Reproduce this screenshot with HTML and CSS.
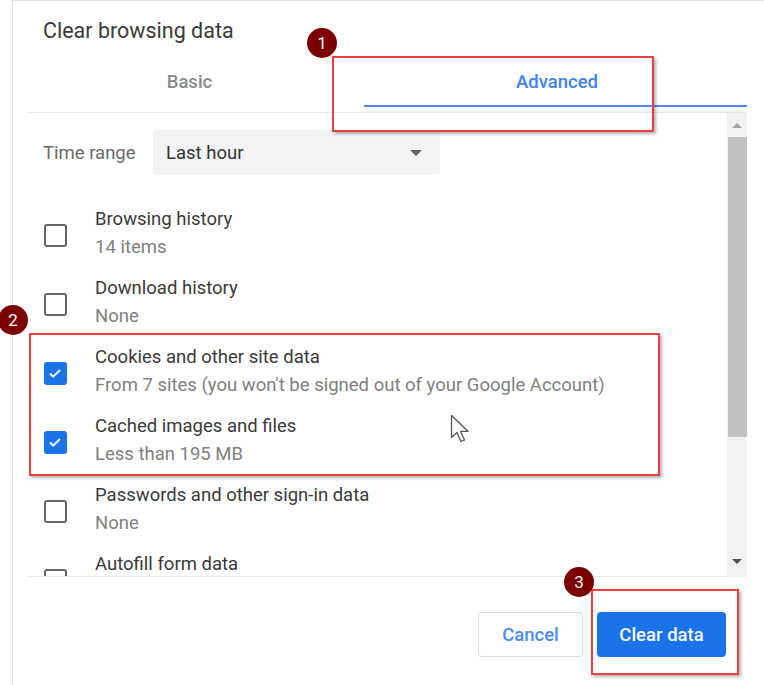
FILE: index.html
```html
<!DOCTYPE html>
<html lang="en">
<head>
    <meta charset="UTF-8">
    <title>Clear browsing data</title>
    <link rel="stylesheet" href="styles.css">
</head>
<body>
    <div class="dialog">
        <div class="title">Clear browsing data</div>

        <div class="tabs">
            <div class="tab">Basic</div>
            <div class="tab active">Advanced</div>
        </div>

        <div class="content">
            <div class="list">
                <div class="time-range">
                    <span class="label">Time range</span>
                    <div class="select">
                        <span>Last hour</span>
                        <span class="caret"></span>
                    </div>
                </div>

                <div class="row">
                    <div class="checkbox"></div>
                    <div class="text">
                        <div class="name">Browsing history</div>
                        <div class="sub">14 items</div>
                    </div>
                </div>
                <div class="row">
                    <div class="checkbox"></div>
                    <div class="text">
                        <div class="name">Download history</div>
                        <div class="sub">None</div>
                    </div>
                </div>
                <div class="row">
                    <div class="checkbox checked">
                        <svg viewBox="0 0 20 20" width="20" height="20"><path d="M5 10.5l3.2 3.2L15 7" fill="none" stroke="#fff" stroke-width="2"/></svg>
                    </div>
                    <div class="text">
                        <div class="name">Cookies and other site data</div>
                        <div class="sub">From 7 sites (you won't be signed out of your Google Account)</div>
                    </div>
                </div>
                <div class="row">
                    <div class="checkbox checked">
                        <svg viewBox="0 0 20 20" width="20" height="20"><path d="M5 10.5l3.2 3.2L15 7" fill="none" stroke="#fff" stroke-width="2"/></svg>
                    </div>
                    <div class="text">
                        <div class="name">Cached images and files</div>
                        <div class="sub">Less than 195 MB</div>
                    </div>
                </div>
                <div class="row">
                    <div class="checkbox"></div>
                    <div class="text">
                        <div class="name">Passwords and other sign-in data</div>
                        <div class="sub">None</div>
                    </div>
                </div>
                <div class="row">
                    <div class="checkbox"></div>
                    <div class="text">
                        <div class="name">Autofill form data</div>
                    </div>
                </div>
            </div>

            <div class="scrollbar">
                <span class="arrow up"></span>
                <div class="thumb"></div>
                <span class="arrow down"></span>
            </div>
        </div>

        <div class="footer">
            <button class="btn cancel">Cancel</button>
            <button class="btn primary">Clear data</button>
        </div>
    </div>

    <!-- annotations drawn over the screenshot -->
    <div class="mark mark-1"></div>
    <div class="mark mark-2"></div>
    <div class="mark mark-3"></div>
    <div class="badge badge-1">1</div>
    <div class="badge badge-2">2</div>
    <div class="badge badge-3">3</div>

    <svg class="cursor" viewBox="0 0 22 32" width="22" height="32">
        <path d="M1.5 1.5v22l5.5-5 4 9 3.5-1.6-4-8.6h7.5z" fill="#fff" stroke="#555" stroke-width="1.3" stroke-linejoin="round"/>
    </svg>
</body>
</html>
```

FILE: styles.css
```css
body {
    margin: 0;
    width: 764px;
    height: 685px;
    overflow: hidden;
    background: #fff;
    font-family: Roboto, "Liberation Sans", sans-serif;
    position: relative;
}
.dialog {
    margin-left: 12px;
    height: 684px;
    border-top: 1px solid #e3e3e3;
    border-left: 1px solid #e3e3e3;
}
.title {
    padding: 18px 0 14px 30px;
    font-size: 21.5px;
    line-height: 24px;
    color: #3a3a3a;
}
.tabs {
    display: flex;
    margin-left: 16px;
    width: 718px;
    height: 55px;
}
.tab {
    height: 50px;
    line-height: 50px;
    text-align: center;
    font-size: 18.5px;
    font-weight: 500;
    color: #8a8a8a;
    width: 321px;
    padding-right: 14px;
}
.tab.active {
    width: 383px;
    padding: 0 0 0 3px;
    box-sizing: border-box;
    color: #3f82f0;
    border-bottom: 2px solid #4a8af4;
}
.content {
    display: flex;
    margin-left: 16px;
    width: 718px;
    height: 464px;
    border-top: 1px solid #e6e6e6;
}
.list {
    flex: 1;
    overflow: hidden;
    border-bottom: 1px solid #e6e6e6;
    padding-top: 17px;
}
.time-range {
    display: flex;
    align-items: center;
    padding-left: 14px;
    margin-bottom: 30px;
}
.label {
    width: 110px;
    font-size: 18.5px;
    color: #6a6a6a;
}
.select {
    width: 261px;
    height: 45px;
    padding: 0 13px;
    display: flex;
    align-items: center;
    justify-content: space-between;
    background: #f1f3f4;
    border-radius: 4px;
    font-size: 18.5px;
    color: #333;
}
.caret {
    width: 0;
    height: 0;
    border-left: 6px solid transparent;
    border-right: 6px solid transparent;
    border-top: 6px solid #5f6368;
    margin-right: 5px;
}
.row {
    display: flex;
    height: 69px;
    align-items: flex-start;
}
.checkbox {
    width: 19px;
    height: 19px;
    margin: 19px 28px 0 15px;
    border: 2px solid #666;
    border-radius: 3px;
}
.checkbox.checked {
    background: #1a73e8;
    border-color: #1a73e8;
}
.checkbox svg {
    display: block;
    margin: -1px;
}
.name {
    font-size: 18.5px;
    line-height: 28px;
    color: #3a3a3a;
}
.sub {
    font-size: 18.5px;
    line-height: 28px;
    color: #808080;
}
.scrollbar {
    width: 20px;
    background: #f1f1f1;
    display: flex;
    flex-direction: column;
    align-items: center;
    height: 464px;
}
.arrow {
    width: 0;
    height: 0;
    border-left: 5px solid transparent;
    border-right: 5px solid transparent;
}
.arrow.up {
    margin: 10px 0 9px;
    border-bottom: 5px solid #a3a3a3;
}
.arrow.down {
    margin-top: 122px;
    border-top: 5px solid #505050;
}
.thumb {
    width: 19px;
    height: 300px;
    background: #c1c1c1;
}
.footer {
    display: flex;
    justify-content: flex-end;
    gap: 14px;
    width: 697px;
    margin-left: 16px;
    padding-top: 35px;
}
.btn {
    height: 45px;
    border-radius: 4px;
    font-family: Roboto, "Liberation Sans", sans-serif;
    font-size: 18.5px;
    font-weight: 500;
}
.cancel {
    width: 105px;
    background: #fff;
    color: #4a8af4;
    border: 1px solid #dadce0;
}
.primary {
    width: 129px;
    background: #1a73e8;
    color: #f4f8ff;
    border: none;
}
.mark {
    position: absolute;
    border: 2px solid #ea4040;
    box-shadow: 2px 2px 3px rgba(0, 0, 0, 0.3);
}
.mark-1 { left: 332px; top: 56px; width: 318px; height: 72px; }
.mark-2 { left: 29px; top: 333px; width: 627px; height: 139px; }
.mark-3 { left: 591px; top: 589px; width: 144px; height: 82px; }
.badge {
    position: absolute;
    width: 30px;
    height: 30px;
    border-radius: 50%;
    background: #7d0000;
    color: #fff;
    font-size: 17px;
    line-height: 30px;
    text-align: center;
}
.badge-1 { left: 307px; top: 28px; }
.badge-2 { left: -2px; top: 305px; }
.badge-3 { left: 564px; top: 567px; }
.cursor {
    position: absolute;
    left: 450px;
    top: 414px;
}
```
